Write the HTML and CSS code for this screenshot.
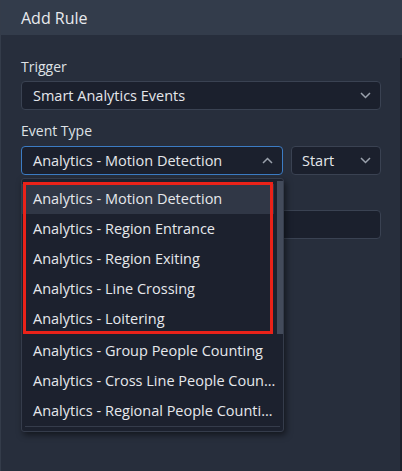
FILE: index.html
```html
<!DOCTYPE html>
<html>
<head>
<meta charset="utf-8">
<link rel="stylesheet" href="styles.css">
</head>
<body>
<div class="dialog">
  <div class="header">Add Rule</div>
  <div class="body">
    <div class="label">Trigger</div>
    <div class="select">
      <span>Smart Analytics Events</span>
      <svg class="chev" width="11" height="7" viewBox="0 0 11 7"><path d="M1 1 L5.5 5.5 L10 1" fill="none" stroke="#9aa1ac" stroke-width="1.5"/></svg>
    </div>
    <div class="label second">Event Type</div>
    <div class="row">
      <div class="field-wrap">
        <div class="select focused">
          <span>Analytics - Motion Detection</span>
          <svg class="chev" width="11" height="7" viewBox="0 0 11 7"><path d="M1 6 L5.5 1.5 L10 6" fill="none" stroke="#9aa1ac" stroke-width="1.5"/></svg>
        </div>
        <div class="dropdown">
          <div class="list">
            <div class="item hover">Analytics - Motion Detection</div>
            <div class="item">Analytics - Region Entrance</div>
            <div class="item">Analytics - Region Exiting</div>
            <div class="item">Analytics - Line Crossing</div>
            <div class="item">Analytics - Loitering</div>
            <div class="item gap">Analytics - Group People Counting</div>
            <div class="item">Analytics - Cross Line People Counting</div>
            <div class="item">Analytics - Regional People Counting</div>
          </div>
          <div class="sep"></div>
          <div class="thumb"></div>
          <div class="mark"></div>
        </div>
      </div>
      <div class="select small">
        <span>Start</span>
        <svg class="chev" width="11" height="7" viewBox="0 0 11 7"><path d="M1 1 L5.5 5.5 L10 1" fill="none" stroke="#9aa1ac" stroke-width="1.5"/></svg>
      </div>
    </div>
    <div class="spacer"></div>
    <div class="select blank"></div>
  </div>
  <div class="edge"></div>
</div>
</body>
</html>
```

FILE: styles.css
```css
html, body {
  margin: 0;
  padding: 0;
  background: #272e3c;
}
body {
  font-family: "Open Sans", "Noto Sans", sans-serif;
  color: #e4e6ea;
  font-size: 14px;
}
.dialog {
  position: relative;
  width: 402px;
  height: 471px;
  background: #272e3c;
  border-left: 1px solid #343c4a;
  box-sizing: border-box;
  overflow: hidden;
}
.header {
  height: 35px;
  background: #333c4b;
  font-size: 16px;
  line-height: 36px;
  padding-left: 20px;
  color: #e8eaee;
}
.body {
  padding: 0 21px 0 20px;
}
.label {
  line-height: 20px;
  margin-top: 22px;
  margin-bottom: 4px;
  color: #dfe2e6;
}
.label.second {
  margin-top: 11px;
  margin-bottom: 5px;
}
.spacer {
  height: 35px;
}
.select {
  height: 29px;
  box-sizing: border-box;
  border: 1px solid #3a4252;
  border-radius: 4px;
  background: #1b202d;
  display: flex;
  align-items: center;
  justify-content: space-between;
  padding: 0 9px 0 11px;
  font-size: 14.5px;
}
.select.focused {
  border-color: #3c7cc4;
}
.row {
  display: flex;
  gap: 8px;
}
.field-wrap {
  position: relative;
  width: 262px;
}
.select.small {
  flex: 1;
  padding-left: 10px;
}
.dropdown {
  position: absolute;
  left: 0;
  top: 32px;
  width: 263px;
  height: 254px;
  box-sizing: border-box;
  background: #1c212e;
  border: 1px solid #353c4b;
  border-radius: 3px;
  box-shadow: 2px 3px 6px rgba(0, 0, 0, 0.5);
  padding-top: 5px;
  z-index: 5;
}
.list {
  width: 255px;
}
.item {
  height: 30px;
  line-height: 30px;
  padding-left: 11px;
  white-space: nowrap;
  overflow: hidden;
  text-overflow: ellipsis;
  color: #e6e8ec;
  width: 244px;
  font-size: 14.5px;
}
.item.hover {
  background: #303746;
  width: 252px;
  box-sizing: border-box;
}
.item.gap {
  margin-top: 2px;
}
.sep {
  margin: 0 3px;
  height: 1px;
  background: #353c4b;
}
.thumb {
  position: absolute;
  right: 0;
  top: 2px;
  width: 6px;
  height: 153px;
  background: #434b5b;
}
.mark {
  position: absolute;
  left: 1px;
  top: 3px;
  width: 250px;
  height: 152px;
  border: 3px solid #ea2219;
  box-sizing: border-box;
}
.edge {
  position: absolute;
  right: 0;
  top: 58px;
  width: 2px;
  bottom: 0;
  background: #1c212c;
}
```
